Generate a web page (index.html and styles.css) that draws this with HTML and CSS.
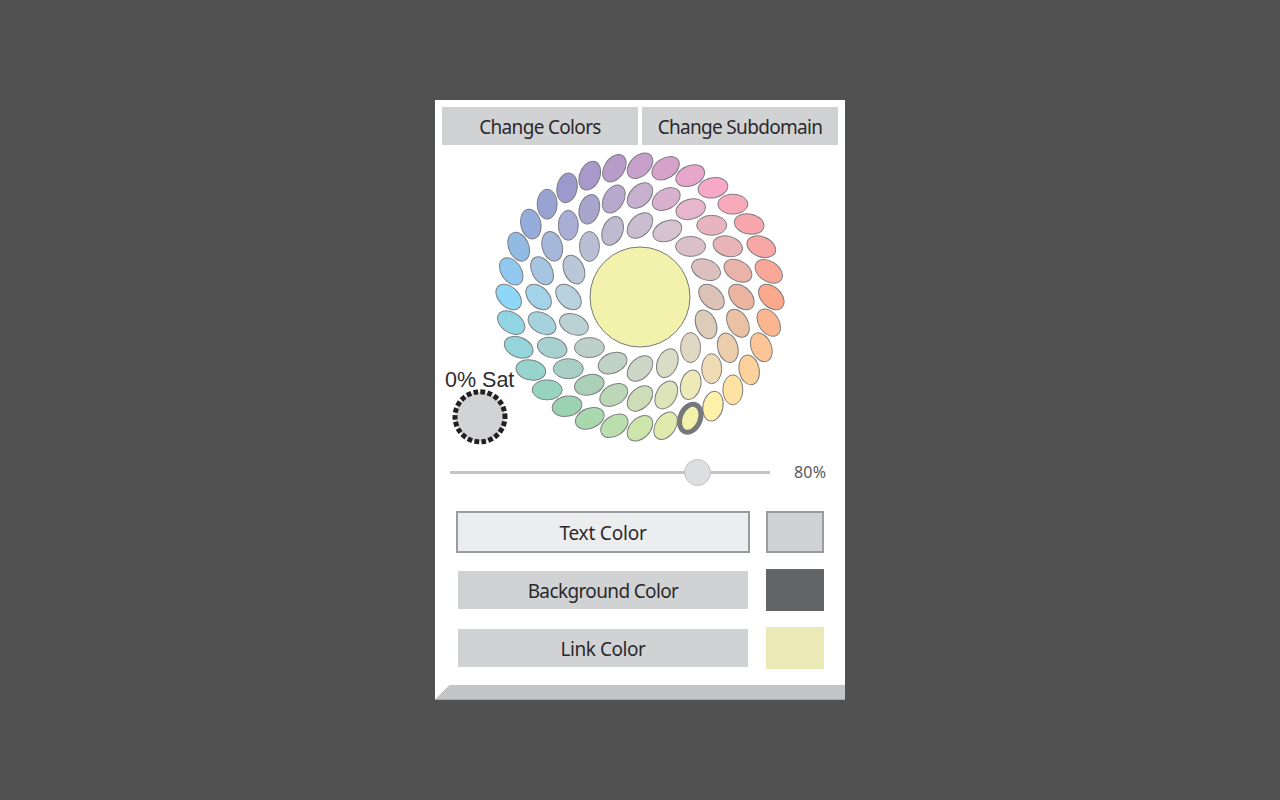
FILE: index.html
```html
<!DOCTYPE html>
<html lang="en">
<head>
<meta charset="utf-8">
<title>Color settings</title>
<link rel="stylesheet" href="styles.css">
</head>
<body>
<main class="panel">
  <nav class="tabs">
    <button class="btn"><span>Change Colors</span></button>
    <button class="btn"><span>Change Subdomain</span></button>
  </nav>
  <section class="picker">
    <svg class="wheel" width="410" height="310" viewBox="0 0 410 310">
      <g id="rings"></g>
      <circle class="current" cx="205" cy="152" r="50"/>
      <circle class="gray" cx="45" cy="271.8" r="25" transform="rotate(-5.4 45 271.8)"/>
      <text class="sat" x="10" y="242.2">0% Sat</text>
    </svg>
  </section>
  <div class="slider">
    <div class="track"><i class="thumb"></i></div>
    <span class="value">80%</span>
  </div>
  <section class="targets">
    <div class="row active"><button class="btn"><span>Text Color</span></button><i class="swatch text"></i></div>
    <div class="row"><button class="btn wide"><span>Background Color</span></button><i class="swatch background"></i></div>
    <div class="row"><button class="btn link-btn"><span>Link Color</span></button><i class="swatch link"></i></div>
  </section>
  <footer class="edge"></footer>
</main>
<script src="script.js"></script>
</body>
</html>
```
FILE: styles.css
```css
* { box-sizing: border-box; }
body {
  margin: 0;
  min-height: 800px;
  display: flex;
  align-items: center;
  justify-content: center;
  background: #515151;
  font-family: "Noto Sans", sans-serif;
}
.panel {
  width: 410px;
  height: 600px;
  display: flex;
  flex-direction: column;
  background: #fff;
}
.tabs { display: flex; gap: 4px; padding: 7px 7px 0; }
.btn {
  flex: 1;
  height: 38px;
  padding: 0;
  border: 0;
  background: #d1d2d4;
  color: #2b292c;
  font: 19px/38px "Noto Sans", sans-serif;
  letter-spacing: -0.2px;
}
.btn span { display: block; padding-top: 2px; line-height: 36px; }
.tabs .btn { letter-spacing: -0.68px; }
.btn.wide { letter-spacing: -0.63px; }
.btn.link-btn { letter-spacing: -0.45px; }
.picker { height: 310px; }
.wheel { display: block; }
.petal { stroke: #7d7e82; stroke-width: 1; }
.selected { stroke: #77787b; stroke-width: 5; }
.current { fill: #f2f2ac; stroke: #77787b; stroke-width: 1; }
.gray { fill: #d1d3d4; stroke: #231f20; stroke-width: 5; stroke-dasharray: 4.7 2.35; }
.sat { font: 21.5px "Liberation Sans", Arial, sans-serif; fill: #2f2c2f; }
.slider {
  height: 35px;
  display: flex;
  align-items: center;
  padding: 0 15px;
}
.track {
  width: 320px;
  height: 3px;
  padding-left: 234px;
  display: flex;
  align-items: center;
  background: #c3c3c8;
}
.thumb {
  width: 27px;
  height: 27px;
  flex: none;
  border: 1px solid #c3c3c6;
  border-radius: 50%;
  background: #dddee0;
}
.value { margin-left: 24px; padding-bottom: 2px; font-size: 16px; letter-spacing: 0.2px; color: #58595b; }
.targets { display: flex; flex-direction: column; gap: 16px; padding: 21px 21px 0; }
.row { display: flex; gap: 16px; height: 42px; }
.row .btn { height: auto; border: 2px solid #fff; }
.row.active .btn { border-color: #9b9ca0; background: #ebedef; }
.swatch { width: 58px; }
.swatch.text { background: #d1d2d4; border: 2px solid #9b9ca0; }
.swatch.background { background: #636466; }
.swatch.link { background: #ebeab6; }
.edge {
  height: 15px;
  margin-top: auto;
  background: linear-gradient(135deg, #fff 0 10px, #c4c5c7 10px);
  border-bottom: 1px solid #a9aaac;
}
```
FILE: script.js
```js
const rings = [
  { radius: 131.3, colors: "c79fcb d7a2ca e7a6cb f6a8c5 f6a9b8 f7a7ac f8a7a4 f9a897 faa98d fbb690 fcc596 fdd19c ffe1a2 fff1a9 f2f1ab dfeaac cde5ab bbdead a9d8ad 9bd3b2 98d3c0 96d4cd 94d5d9 91d5e4 8ed7f8 90c8f0 92bbe3 96addb 99a3d2 9c99cc a799ca b79bc9" },
  { radius: 101.4, colors: "c7afce d7b1cd e7b6cc e8b4c0 e8b4b5 e9b3aa eab49f ebc1a4 ecceac eedab3 eee9b8 dde4b9 cdddb8 bbd7b7 abcfb7 a9cfc4 a6d1d0 a5d2dc a2d3e9 a5c5e2 a6b8da a8add3 a8a4cb b7a8cd" },
  { radius: 71.5, colors: "cbbdd0 d7c2d0 dbc0c9 dcc0c0 dcc2b7 deccbb e0d7c2 d9ddc5 cdd7c7 c0d2c5 bccfc9 bbd2d4 b9d2de b9c7d8 b8bed3 bebad0" }
];
const group = document.getElementById("rings");

function petal(radius, angle, color, selected) {
  const el = document.createElementNS("http://www.w3.org/2000/svg", "ellipse");
  el.setAttribute("class", selected ? "selected" : "petal");
  el.setAttribute("rx", selected ? 14.5 : 15);
  el.setAttribute("ry", 10);
  el.setAttribute("fill", "#" + color);
  el.setAttribute("transform", `translate(205 152) rotate(${angle}) translate(0 ${-radius}) rotate(-45)`);
  group.append(el);
}

rings.forEach((ring, r) => {
  const colors = ring.colors.split(" ");
  colors.forEach((color, i) => petal(ring.radius, i * 360 / colors.length, color, r === 0 && i === 14));
});
```
